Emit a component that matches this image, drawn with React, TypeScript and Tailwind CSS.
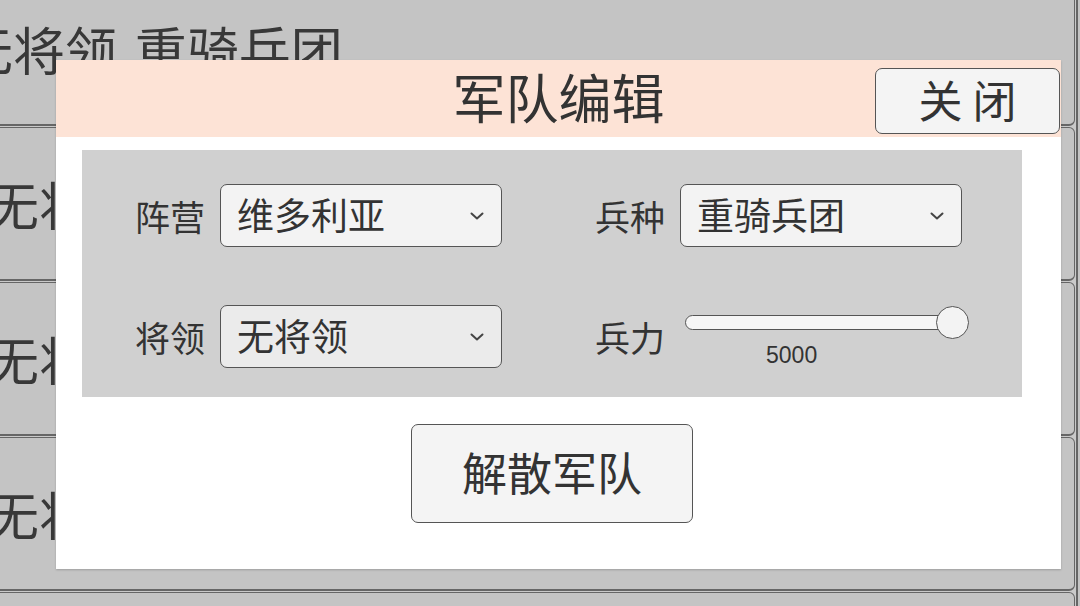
import React from "react";

function Chevron() {
  return (
    <svg width="14" height="8" viewBox="0 0 14 8" fill="none">
      <polyline points="1.5,1.5 7,6.5 12.5,1.5" stroke="#444" strokeWidth="2" strokeLinecap="round" strokeLinejoin="round" />
    </svg>
  );
}

function Dropdown({ value, dim }: { value: string; dim?: boolean }) {
  return (
    <div
      className={`flex h-[63px] w-[282px] items-center justify-between rounded-[7px] border border-[#555] pl-[16px] pr-[17px] ${
        dim ? "bg-[#ebebeb]" : "bg-[#f3f3f3]"
      }`}
    >
      <span className="pb-[2px] text-[37px] leading-none">{value}</span>
      <Chevron />
    </div>
  );
}

function ListRow({ shift }: { shift: string }) {
  return (
    <div className="ml-[-6px] flex h-[154px] w-[1081px] shrink-0 items-center overflow-hidden rounded-[6px] border-[1.5px] border-b-2 border-[#666] bg-[#c4c4c4]">
      <span className={`whitespace-nowrap text-[52px] leading-none text-[#383838] [word-spacing:6px] ${shift}`}>
        无将领 重骑兵团
      </span>
    </div>
  );
}

export default function App() {
  return (
    <div className="relative h-[606px] w-[1080px] overflow-hidden bg-[#c9c9c9] font-['Noto_Sans_CJK_SC',sans-serif] text-[#333]">
      {/* army list behind the dialog */}
      <div className="flex h-full">
        <div className="mt-[-28px] flex w-[1075px] flex-col gap-[1px]">
          <ListRow shift="ml-[-34px]" />
          <ListRow shift="ml-[-8px]" />
          <ListRow shift="ml-[-8px]" />
          <ListRow shift="ml-[-8px]" />
          <ListRow shift="ml-[-8px]" />
        </div>
        <div className="ml-[1px] flex-1 border-l-2 border-[#666] bg-[#c4c4c4]" />
      </div>

      {/* dialog */}
      <div className="absolute left-[56px] top-[60px] w-[1005px] shadow-[0_1px_2px_rgba(0,0,0,0.2)]">
        <div className="relative flex h-[77px] items-center justify-center bg-[#fde3d6]">
          <span className="pb-[4px] text-[53px] leading-none">军队编辑</span>
          <button className="absolute right-[1px] top-[8px] flex h-[66px] w-[185px] items-center justify-center rounded-[7px] border border-[#555] bg-[#f4f4f4] pb-[5px] text-[44px] leading-none">
            关 闭
          </button>
        </div>

        <div className="flex flex-col items-center bg-white pb-[46px] pl-[26px] pr-[39px] pt-[13px]">
          <div className="grid h-[247px] w-[940px] grid-cols-[460px_1fr] content-start gap-y-[58px] bg-[#d0d0d0] pl-[53px] pt-[34px]">
            <div className="flex items-center gap-[15px]">
              <span className="text-[35px] leading-none">阵营</span>
              <Dropdown value="维多利亚" />
            </div>
            <div className="flex items-center gap-[15px]">
              <span className="text-[35px] leading-none">兵种</span>
              <Dropdown value="重骑兵团" />
            </div>
            <div className="flex items-center gap-[15px]">
              <span className="text-[35px] leading-none">将领</span>
              <Dropdown value="无将领" dim />
            </div>
            <div className="flex items-center gap-[15px]">
              <span className="text-[35px] leading-none">兵力</span>
              <div className="relative ml-[5px] flex h-[63px] w-[284px] flex-col">
                <div className="mt-[10px] h-[15px] w-[270px] rounded-full border border-[#555] bg-[#f6f6f6]" />
                <span className="ml-[81px] mt-[14px] font-['Liberation_Sans',sans-serif] text-[23px] leading-none text-[#333]">
                  5000
                </span>
                <div className="absolute left-[251px] top-[1px] h-[33px] w-[33px] rounded-full border border-[#555] bg-[#f3f3f3]" />
              </div>
            </div>
          </div>

          <button className="mt-[27px] flex h-[99px] w-[282px] items-center justify-center rounded-[7px] border border-[#555] bg-[#f4f4f4] pb-[5px] text-[45px] leading-none">
            解散军队
          </button>
        </div>
      </div>
    </div>
  );
}
